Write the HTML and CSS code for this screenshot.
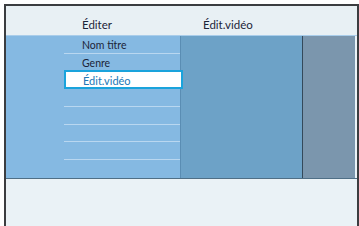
FILE: index.html
```html
<!DOCTYPE html>
<html lang="fr">
<head>
    <meta charset="UTF-8">
    <meta name="viewport" content="width=device-width, initial-scale=1.0">
    <title>Éditer</title>
    <link rel="stylesheet" href="styles.css">
</head>
<body>
    <div class="screen">
        <div class="header">
            <div class="title">Éditer</div>
            <div class="title second">Édit.vidéo</div>
            <div></div>
        </div>

        <div class="columns">
            <div class="col col-menu">
                <ul class="menu">
                    <li>Nom titre</li>
                    <li>Genre</li>
                    <li class="selected">Édit.vidéo</li>
                    <li></li>
                    <li></li>
                    <li></li>
                    <li></li>
                    <li class="last"></li>
                </ul>
            </div>
            <div class="col col-sub"></div>
            <div class="col col-side"></div>
        </div>

        <div class="footer"></div>
    </div>
</body>
</html>
```

FILE: styles.css
```css
body {
    margin: 0;
    background-color: #ffffff;
    font-family: Lato, "Open Sans", sans-serif;
    color: #1c2438;
}
.screen {
    margin: 4px 0 0 4px;
    width: 351px;
    height: 220px;
    overflow: hidden;
    border: 2px solid #3b3d40;
    border-bottom: none;
    background-color: #eaf2f6;
}
.header {
    display: grid;
    grid-template-columns: 174px 122px 53px;
    height: 29px;
    background-color: #e8f0f4;
    border-bottom: 1px solid #a9cdea;
}
.title {
    font-size: 11.5px;
    line-height: 21px;
    padding-top: 8px;
    padding-left: 76px;
}
.title.second {
    padding-left: 23px;
}
.columns {
    display: grid;
    grid-template-columns: 174px 122px 53px;
    height: 142px;
    border-bottom: 1px solid #4f6f86;
}
.col-menu {
    background-color: #85b9e2;
}
.col-sub {
    background-color: #6da2c7;
    border-left: 1px solid #5a8db3;
}
.col-side {
    background-color: #7b96ad;
    border-left: 1px solid #34495a;
}
.menu {
    list-style: none;
    margin: 0 0 0 58px;
    padding: 0;
    position: relative;
    z-index: 1;
}
.menu li {
    box-sizing: border-box;
    height: 17.75px;
    padding: 1px 0 0 18px;
    font-size: 10.5px;
    line-height: 16px;
    border-bottom: 1px solid #b9d7f0;
}
.menu li.last {
    border-bottom: none;
}
.menu li.selected {
    margin: -1.5px -3px 0 0;
    height: 19px;
    padding: 2px 0 0 17px;
    background-color: #ffffff;
    border: 2px solid #1aa3dc;
    color: #2178b6;
    font-size: 11px;
    line-height: 14px;
}
.footer {
    height: 60px;
}
```
